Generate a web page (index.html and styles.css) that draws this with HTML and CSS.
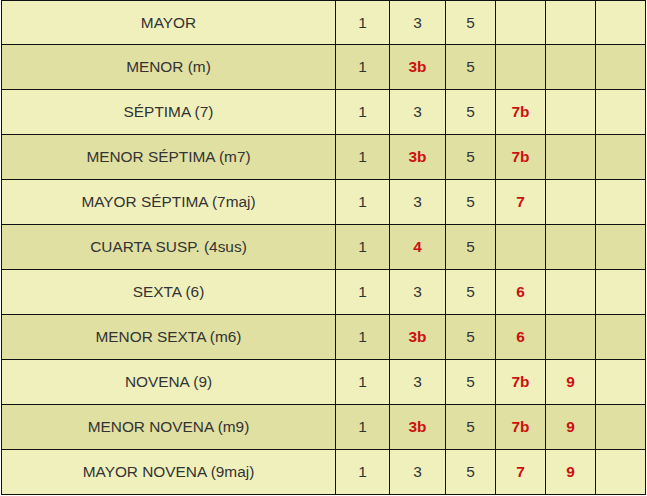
FILE: index.html
```html
<!DOCTYPE html>
<html lang="es">
<head>
<meta charset="utf-8">
<title>Acordes</title>
<link rel="stylesheet" href="styles.css">
</head>
<body>
<table class="chords">
  <colgroup>
    <col class="c-name"><col class="c1"><col class="c2"><col class="c3"><col class="c4"><col class="c5"><col class="c6">
  </colgroup>
  <tbody>
    <tr class="light first"><td>MAYOR</td><td>1</td><td>3</td><td>5</td><td></td><td></td><td></td></tr>
    <tr class="dark"><td>MENOR (m)</td><td>1</td><td class="red">3b</td><td>5</td><td></td><td></td><td></td></tr>
    <tr class="light"><td>SÉPTIMA (7)</td><td>1</td><td>3</td><td>5</td><td class="red">7b</td><td></td><td></td></tr>
    <tr class="dark"><td>MENOR SÉPTIMA (m7)</td><td>1</td><td class="red">3b</td><td>5</td><td class="red">7b</td><td></td><td></td></tr>
    <tr class="light"><td>MAYOR SÉPTIMA (7maj)</td><td>1</td><td>3</td><td>5</td><td class="red">7</td><td></td><td></td></tr>
    <tr class="dark"><td>CUARTA SUSP. (4sus)</td><td>1</td><td class="red">4</td><td>5</td><td></td><td></td><td></td></tr>
    <tr class="light"><td>SEXTA (6)</td><td>1</td><td>3</td><td>5</td><td class="red">6</td><td></td><td></td></tr>
    <tr class="dark"><td>MENOR SEXTA (m6)</td><td>1</td><td class="red">3b</td><td>5</td><td class="red">6</td><td></td><td></td></tr>
    <tr class="light"><td>NOVENA (9)</td><td>1</td><td>3</td><td>5</td><td class="red">7b</td><td class="red">9</td><td></td></tr>
    <tr class="dark"><td>MENOR NOVENA (m9)</td><td>1</td><td class="red">3b</td><td>5</td><td class="red">7b</td><td class="red">9</td><td></td></tr>
    <tr class="light"><td>MAYOR NOVENA (9maj)</td><td>1</td><td>3</td><td>5</td><td class="red">7</td><td class="red">9</td><td></td></tr>
  </tbody>
</table>
</body>
</html>
```

FILE: styles.css
```css
html, body {
  margin: 0;
  padding: 0;
  background: #ffffff;
}

body {
  padding-left: 1px;
  font-family: "Liberation Sans", Arial, sans-serif;
}

.chords {
  border-collapse: collapse;
  table-layout: fixed;
  width: 645px;
}

.c-name { width: 334px; }
.c1 { width: 54px; }
.c2 { width: 56px; }
.c3 { width: 50px; }
.c4 { width: 50px; }
.c5 { width: 50px; }
.c6 { width: 50px; }

.chords td {
  border: 1px solid #111111;
  height: 45px;
  padding: 0;
  box-sizing: border-box;
  text-align: center;
  vertical-align: middle;
  font-size: 15.4px;
  color: #333333;
}

.chords tr.first td {
  height: 44px;
}

.chords tr.light td {
  background: #f0f0bd;
}

.chords tr.dark td {
  background: #e0e0a2;
}

.chords td.red {
  color: #cc1111;
  font-weight: bold;
}
```
